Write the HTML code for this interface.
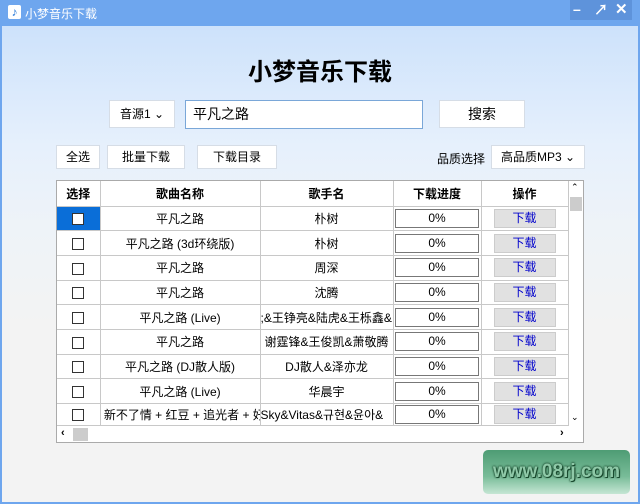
<!DOCTYPE html><html><head><meta charset="utf-8"><style>
*{margin:0;padding:0;box-sizing:border-box}
body{width:640px;height:504px;overflow:hidden;font-family:"Liberation Sans","Noto Sans CJK SC",sans-serif;font-size:12px;color:#000;position:relative;background:#6ea6ee}
.abs{position:absolute}
#main{left:2px;top:26px;width:636px;height:476px;background:linear-gradient(#cde2fb 0px,#e6f0fc 120px,#eef3f8 200px,#f3f3f3 300px,#f3f3f3)}
.btn{position:absolute;background:#fff;border:1px solid #d6dde6;text-align:center;font-size:12px}
table{border-collapse:collapse;position:absolute;left:57px;top:181px;width:511px;background:#fff;table-layout:fixed}
td,th{border-right:1px solid #c8c8c8;border-bottom:1px solid #c8c8c8;height:24.7px;text-align:center;font-size:12px;white-space:nowrap;overflow:hidden;padding:0}
th{height:25px;font-weight:bold}
.cb{display:inline-block;width:12px;height:12px;border:1px solid #333;vertical-align:middle}
.pg{display:inline-block;width:84px;height:19px;border:1px solid #777;line-height:17px}
.dl{display:inline-block;width:62px;height:19px;background:#e1e1e1;border:1px solid #ccc;color:#0000cc;line-height:17px}
</style></head><body>
<div class="abs" style="left:8px;top:5px;width:13px;height:14px;background:#fff;border-radius:2px;color:#2a7ad8;font-size:12px;line-height:14px;text-align:center">♪</div>
<div class="abs" style="left:25px;top:5px;color:#fff;font-size:12px">小梦音乐下载</div>
<div class="abs" style="left:570px;top:0;width:62px;height:20px;background:#5e93db"></div>
<div class="abs" style="left:573px;top:1px;color:#fff;font-weight:bold;font-size:14px">–</div>
<div class="abs" style="left:594px;top:0px;color:#fff;font-weight:bold;font-size:14px">↗</div>
<div class="abs" style="left:615px;top:0px;color:#fff;font-weight:bold;font-size:15px">✕</div>
<div class="abs" id="main"></div>
<div class="abs" style="left:0;top:52px;width:640px;text-align:center;font-size:24px;font-weight:bold">小梦音乐下载</div>
<div class="btn" style="left:109px;top:100px;width:66px;height:28px;line-height:26px">音源1 ⌄</div>
<div class="abs" style="left:185px;top:100px;width:238px;height:29px;background:#fff;border:1px solid #7aa7d8;font-size:14px;line-height:27px;padding-left:7px">平凡之路</div>
<div class="btn" style="left:439px;top:100px;width:86px;height:28px;line-height:26px;font-size:14px">搜索</div>
<div class="btn" style="left:56px;top:145px;width:44px;height:24px;line-height:22px">全选</div>
<div class="btn" style="left:107px;top:145px;width:78px;height:24px;line-height:22px">批量下载</div>
<div class="btn" style="left:197px;top:145px;width:80px;height:24px;line-height:22px">下载目录</div>
<div class="abs" style="left:437px;top:150px">品质选择</div>
<div class="btn" style="left:491px;top:145px;width:94px;height:24px;line-height:22px">高品质MP3 ⌄</div>
<div class="abs" style="left:56px;top:180px;width:528px;height:263px;border:1px solid #aaa;background:#fff"></div>
<table>
<colgroup><col style="width:43px"><col style="width:160px"><col style="width:133px"><col style="width:88px"><col style="width:87px"></colgroup>
<tr><th>选择</th><th>歌曲名称</th><th>歌手名</th><th>下载进度</th><th>操作</th></tr>
<tr><td style="background:#0a6ed8"><span class="cb" style="border-color:#333;background:#fff"></span></td><td>平凡之路</td><td>朴树</td><td><span class="pg">0%</span></td><td><span class="dl">下载</span></td></tr>
<tr><td><span class="cb"></span></td><td>平凡之路 (3d环绕版)</td><td>朴树</td><td><span class="pg">0%</span></td><td><span class="dl">下载</span></td></tr>
<tr><td><span class="cb"></span></td><td>平凡之路</td><td>周深</td><td><span class="pg">0%</span></td><td><span class="dl">下载</span></td></tr>
<tr><td><span class="cb"></span></td><td>平凡之路</td><td>沈腾</td><td><span class="pg">0%</span></td><td><span class="dl">下载</span></td></tr>
<tr><td><span class="cb"></span></td><td>平凡之路 (Live)</td><td style="text-align:left">;&amp;王铮亮&amp;陆虎&amp;王栎鑫&amp;</td><td><span class="pg">0%</span></td><td><span class="dl">下载</span></td></tr>
<tr><td><span class="cb"></span></td><td>平凡之路</td><td>谢霆锋&amp;王俊凯&amp;萧敬腾</td><td><span class="pg">0%</span></td><td><span class="dl">下载</span></td></tr>
<tr><td><span class="cb"></span></td><td>平凡之路 (DJ散人版)</td><td>DJ散人&amp;泽亦龙</td><td><span class="pg">0%</span></td><td><span class="dl">下载</span></td></tr>
<tr><td><span class="cb"></span></td><td>平凡之路 (Live)</td><td>华晨宇</td><td><span class="pg">0%</span></td><td><span class="dl">下载</span></td></tr>
<tr><td style="height:22px"><span class="cb"></span></td><td style="text-align:left;height:22px">&nbsp;新不了情 + 红豆 + 追光者 + 好</td><td style="text-align:left;height:22px">Sky&amp;Vitas&amp;규현&amp;윤아&amp;</td><td style="height:22px"><span class="pg">0%</span></td><td style="height:22px"><span class="dl">下载</span></td></tr>
</table>
<div class="abs" style="left:569px;top:181px;width:14px;height:247px;background:#fff"></div>
<div class="abs" style="left:571px;top:182px;font-size:9px">⌃</div>
<div class="abs" style="left:570px;top:197px;width:12px;height:14px;background:#ccc"></div>
<div class="abs" style="left:571px;top:412px;font-size:9px">⌄</div>
<div class="abs" style="left:57px;top:427px;width:526px;height:15px;background:#fff"></div>
<div class="abs" style="left:61px;top:427px;font-size:11px;font-weight:bold">‹</div>
<div class="abs" style="left:73px;top:428px;width:15px;height:13px;background:#ccc"></div>
<div class="abs" style="left:560px;top:427px;font-size:11px;font-weight:bold">›</div>
<div class="abs" style="left:483px;top:450px;width:147px;height:44px;border-radius:5px;background:linear-gradient(#4e9c74,#78bc98 60%,#c5e6d4);color:#8fc9a8;font-size:19px;font-weight:bold;text-align:center;line-height:44px;text-shadow:0 0 2px #1a4a2f,0 0 2px #1a4a2f,1px 1px 0 #1a4a2f">www.08rj.com</div>
</body></html>
